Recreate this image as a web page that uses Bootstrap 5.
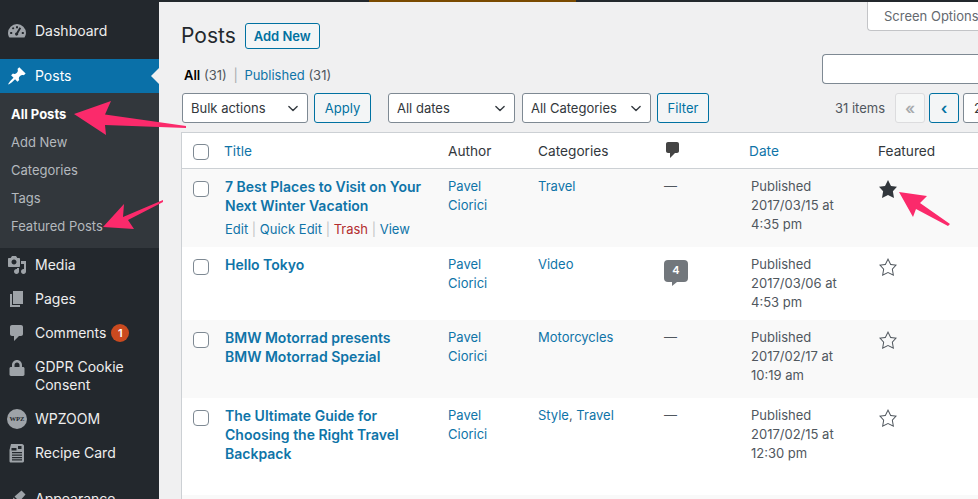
<!DOCTYPE html>
<html lang="en">
<head>
<meta charset="utf-8">
<title>Posts</title>
<link href="https://cdn.jsdelivr.net/npm/bootstrap@5.3.0/dist/css/bootstrap.min.css" rel="stylesheet">
<style>
html,body{height:499px;overflow:hidden}
body{font-family:"Inter","Liberation Sans",sans-serif;font-size:13px;line-height:19px;color:#50575e;background:#f0f0f1;position:relative}
a{text-decoration:none;color:#0f74a8}
.top-strip{height:2px;background:#23282d}
.top-gap{width:369px}
.top-brown{width:207px;background:#7a4a00}
.shell{height:497px}
.side-col{width:159px;flex:none;background:#23282d;overflow:hidden;padding-top:12px}
.side-col .nav-link{display:flex;align-items:flex-start;gap:8px;padding:7px 0 8px 7px;height:34px;color:#eee;font-size:14px;line-height:19px;position:relative}
.side-col .side-tall{height:52px;padding-top:8px;line-height:18px}
.side-ico{width:20px;height:20px;flex:none;fill:#9ea3a8}
.side-col .side-active{background:#0a70a8;color:#fff;margin-top:11px}
.side-active .side-ico{fill:#fff}
.side-notch{position:absolute;right:0;top:9px;border:8px solid transparent;border-right-color:#f0f0f1;border-left-width:0}
.side-sub{background:#32373c;padding:8px 0 7px}
.side-col .side-sub .nav-link{height:28px;padding:4px 0 5px 11px;font-size:13px;color:#b4b9be}
.side-col .side-sub .side-current{color:#fff;font-weight:700}
.side-count{display:inline-block;width:18px;height:18px;border-radius:50%;background:#ca4a1f;color:#fff;font-size:11px;font-weight:600;line-height:18px;text-align:center;margin-left:-3px;margin-top:1px}
.side-gap{margin-top:12px}
.wpz-txt{font-family:"Liberation Serif",serif;font-size:6.6px;font-weight:700;fill:#23282d}
.main-col{flex:1;min-width:0;overflow:hidden;padding-left:22px}
.head-row{height:52px}
.page-ttl{font-family:"Inter","Liberation Sans",sans-serif;font-size:21px;font-weight:400;line-height:26px;color:#23282d;margin:21px 0 0}
.wp-btn{height:30px;padding:0 9px;font-size:13px;line-height:28px;border:1px solid #0071a1;border-radius:3px;background:#f3f5f6;color:#0071a1;flex:none}
.add-btn{height:26px;line-height:24px;font-weight:600;margin:21px 0 0 9px;padding:0 8px}
.screen-tab{width:111px;height:29px;background:#fff;border:1px solid #c3c4c7;border-top:0;border-right:0;border-radius:0 0 0 4px;padding:5px 0 0 16px;color:#646970;white-space:nowrap;overflow:hidden}
.sub-row{height:30px}
.sub-links{color:#50575e;padding-left:3px;margin-bottom:-1px}
.sub-links b{color:#000;font-weight:600}
.sub-sep{color:#a7aaad;margin:0 3px}
.find-box{width:156px;height:30px;border:1px solid #7e8993;border-right:0;border-radius:4px 0 0 4px;background:#fff;padding:0 8px}
.tool-row{height:30px;margin:9px 0 9px 1px;width:900px}
.tool-row .form-select{height:30px;font-size:13px;line-height:28px;padding:0 24px 0 8px;border:1px solid #7e8993;border-radius:3px;color:#32373c;background-position:right 7px center;background-size:14px 11px;flex:none;width:auto}
.pick-bulk{width:126px!important}
.pick-date{width:127px!important;margin-left:9px}
.pick-cat{width:129px!important;margin-left:-1px}
.btn-apply{margin-left:-2px;width:57px}
.btn-filter{margin-left:-2px;width:52px}
.items-lbl{margin-left:118px;width:52px;color:#50575e;line-height:30px;white-space:nowrap}
.pg-wrap{margin-left:0}
.pg-btn{width:30px;height:30px;padding:0;text-align:center;font-size:16px;line-height:26px;font-weight:600}
.pg-off{border-color:#dcdcde;background:#f6f7f7;color:#a7aaad}
.pg-box{border-color:#7e8993;background:#fff;color:#32373c;width:60px;text-align:left;padding-left:10px;font-size:13px;font-weight:400;line-height:28px;border-radius:3px}
.post-tbl{table-layout:fixed;width:1000px;margin:0;border-collapse:separate;border-spacing:0;border:1px solid #ccd0d4;border-width:1px 0 0 1px;--bs-table-bg:#fff;color:#50575e;font-size:13px}
.post-tbl th,.post-tbl td{padding:8px 10px 8px;border:0;font-weight:400;line-height:19px;vertical-align:top;color:#50575e}
.post-tbl thead th{height:35px;padding:9px 10px 7px;color:#32373c;border-bottom:1px solid #ccd0d4;background:#fff;font-size:13.7px}
.post-tbl thead th a{color:#0f74a8}
.post-tbl .hd-title{margin-left:-1px}
.post-tbl .hd-date{margin-left:-2px}
.post-tbl .cell-check{padding:3px 0 0 11px}
.post-tbl thead .cell-check{padding:11px 0 0 11px}
.post-tbl .form-check-input{width:16px;height:16px;margin:0;border:1px solid #7e8993;border-radius:4px;background-color:#fff;display:block;float:none}
.post-tbl tbody .form-check-input{margin-top:9px}
.row-alt td{background:#f9f9f9}
.row-plain td{background:#fff}
.post-ttl{font-weight:600;font-size:14px;display:block;color:#0f74a8}
.row-acts{height:24px;padding-top:5px;white-space:nowrap;color:#c3c4c7}
.row-acts .act-del{color:#b32d2e}
.row-hide{visibility:hidden}
.dash-mark{color:#50575e}
.bubble{display:block;position:relative;width:24px;height:22px;margin-top:5px;background:#72777c;border-radius:4px;color:#fff;font-size:11px;font-weight:600;line-height:21px;text-align:center}
.bubble::after{content:"";position:absolute;left:8px;top:22px;border-top:4px solid #72777c;border-right:5px solid transparent}
.star-svg{width:20px;height:20px;display:block;margin-top:2px}
.hd-bubble{margin:-2px 0 0 -1px;display:block}
.over-art{position:absolute;left:0;top:0;width:978px;height:499px;pointer-events:none}
</style>
</head>
<body>
<div class="top-strip d-flex"><div class="top-gap"></div><div class="top-brown"></div></div>
<div class="shell d-flex">
  <nav class="side-col">
    <ul class="nav flex-column">
      <li class="nav-item"><a class="nav-link" href="#"><svg class="side-ico" viewBox="0 0 20 20"><path fill-rule="evenodd" d="M10 3a9 9 0 0 0-9 9c0 1.9.6 3.4 1.5 4.6h15A8.9 8.9 0 0 0 19 12a9 9 0 0 0-9-9zM9 5.2h2v2H9zM4.8 7.2l1.4-1.2 1.2 1.4L6 8.6zM3.2 11h2v2h-2zM14.8 11h2v2h-2zM12.5 6.2l1.6 1-3 5.2a1.6 1.6 0 1 1-1.7-1z"/></svg>Dashboard</a></li>
      <li class="nav-item"><a class="nav-link side-active" href="#"><svg class="side-ico" viewBox="0 0 20 20"><path d="M10.44 3.02l1.82-1.82 6.36 6.35-1.83 1.82c-1.05-.68-2.48-.57-3.41.36l-.75.75c-.92.93-1.04 2.35-.35 3.41l-1.83 1.82-2.41-2.41-2.8 2.79c-.42.42-3.38 2.71-3.8 2.29s1.86-3.39 2.28-3.81l2.79-2.79L4.1 9.36l1.83-1.82c1.05.69 2.48.57 3.4-.36l.75-.75c.93-.92 1.05-2.35.36-3.41z"/></svg>Posts<span class="side-notch"></span></a></li>
      <li class="nav-item side-sub">
        <a class="nav-link side-current" href="#">All Posts</a>
        <a class="nav-link" href="#">Add New</a>
        <a class="nav-link" href="#">Categories</a>
        <a class="nav-link" href="#">Tags</a>
        <a class="nav-link" href="#">Featured Posts</a>
      </li>
      <li class="nav-item"><a class="nav-link" href="#"><svg class="side-ico" viewBox="0 0 20 20"><path d="M13 11V4c0-.55-.45-1-1-1h-1.67L9 1H5L3.67 3H2c-.55 0-1 .45-1 1v7c0 .55.45 1 1 1h10c.55 0 1-.45 1-1zM7 4.5c1.38 0 2.5 1.12 2.5 2.5S8.38 9.5 7 9.5 4.5 8.38 4.5 7 5.62 4.5 7 4.5zM14 6h5v10.5c0 1.38-1.12 2.5-2.5 2.5S14 17.88 14 16.5s1.12-2.5 2.5-2.5c.17 0 .34.02.5.05V9h-3V6zm-4 8.05V13h2v3.5c0 1.38-1.12 2.5-2.5 2.5S7 17.88 7 16.5 8.12 14 9.5 14c.17 0 .34.02.5.05z"/></svg>Media</a></li>
      <li class="nav-item"><a class="nav-link" href="#"><svg class="side-ico" viewBox="0 0 20 20"><path d="M6 15V2h10v13H6zm-1 1h8v2H3V5h2v11z"/></svg>Pages</a></li>
      <li class="nav-item"><a class="nav-link" href="#"><svg class="side-ico" viewBox="0 0 20 20"><path d="M5 2h9c1.1 0 2 .9 2 2v7c0 1.1-.9 2-2 2h-2l-5 5v-5H5c-1.1 0-2-.9-2-2V4c0-1.1.9-2 2-2z"/></svg>Comments<span class="side-count">1</span></a></li>
      <li class="nav-item"><a class="nav-link side-tall" href="#"><svg class="side-ico" viewBox="0 0 20 20"><path d="M15 9h1c.8 0 1.5.6 1.5 1.4v6.2c0 .8-.7 1.4-1.5 1.4H4c-.8 0-1.500-.6-1.500-1.400v-6.200C2.500 9.600 3.200 9 4 9h1V7c0-2.800 2.200-5 5-5s5 2.200 5 5v2zm-2.500 0V7c0-1.400-1.100-2.500-2.500-2.500S7.500 5.600 7.500 7v2h5z"/></svg><span>GDPR Cookie<br>Consent</span></a></li>
      <li class="nav-item"><a class="nav-link" href="#"><svg class="side-ico" viewBox="0 0 20 20"><circle cx="10" cy="10" r="10"/><text class="wpz-txt" x="10" y="12.300" text-anchor="middle">WPZ</text></svg>WPZOOM</a></li>
      <li class="nav-item"><a class="nav-link" href="#"><svg class="side-ico" viewBox="0 0 20 20"><path fill-rule="evenodd" d="M4 1h11c1 0 2 1 2 2v15c0 1-1 1.500-2 1.500H4c-1 0-1.500-.5-1.500-1.500V7zM11 3v3h3.500V3zM5 9v1.200h10V9zM5 11.500v1.200h10v-1.200zM5 14v1.200h10V14zM5 16.200v1.200h10v-1.200zM4.500 5v2.500h5V5z"/></svg>Recipe Card</a></li>
      <li class="nav-item side-gap"><a class="nav-link" href="#"><svg class="side-ico" viewBox="0 0 20 20"><path d="M14.500 1.500l4 4-6 7-5-5zM6.500 8.500l5 5-2 2-1.500-1-2 4c-1 1.500-4 1.500-4 1.500s2-2 2-4l1-3.500z"/></svg>Appearance</a></li>
    </ul>
  </nav>
  <main class="main-col">
    <div class="head-row d-flex align-items-start">
      <h1 class="page-ttl">Posts</h1>
      <a class="btn wp-btn add-btn" href="#">Add New</a>
      <div class="screen-tab ms-auto">Screen Options</div>
    </div>
    <div class="sub-row d-flex align-items-end">
      <div class="sub-links"><b>All</b> (31) <span class="sub-sep">|</span> <a href="#">Published</a> (31)</div>
      <input class="find-box ms-auto" type="text" aria-label="Search posts">
    </div>
    <div class="tool-row d-flex gap-2 align-items-center">
      <select class="form-select pick-bulk" aria-label="Bulk actions"><option>Bulk actions</option></select>
      <button class="btn wp-btn btn-apply" type="button">Apply</button>
      <select class="form-select pick-date" aria-label="Dates"><option>All dates</option></select>
      <select class="form-select pick-cat" aria-label="Categories"><option>All Categories</option></select>
      <button class="btn wp-btn btn-filter" type="button">Filter</button>
      <span class="items-lbl">31 items</span>
      <span class="d-flex gap-1 pg-wrap">
        <button class="btn wp-btn pg-btn pg-off" type="button">«</button>
        <button class="btn wp-btn pg-btn" type="button">‹</button>
        <span class="btn wp-btn pg-btn pg-box">2</span>
      </span>
    </div>
    <table class="table post-tbl">
      <colgroup><col style="width:33px"><col style="width:223px"><col style="width:90px"><col style="width:126px"><col style="width:87px"><col style="width:127px"><col style="width:120px"><col></colgroup>
      <thead><tr>
        <th class="cell-check"><input class="form-check-input" type="checkbox" aria-label="Select all"></th>
        <th><a class="hd-title" href="#">Title</a></th><th>Author</th><th>Categories</th>
        <th><svg class="hd-bubble" width="20" height="20" viewBox="0 0 20 20" fill="#444"><path d="M5 2h9c1.100 0 2 .9 2 2v7c0 1.100-.9 2-2 2h-2l-5 5v-5H5c-1.100 0-2-.9-2-2V4c0-1.100.9-2 2-2z"/></svg></th>
        <th><a class="hd-date" href="#">Date</a></th><th>Featured</th><th></th>
      </tr></thead>
      <tbody>
        <tr class="row-alt">
          <td class="cell-check"><input class="form-check-input" type="checkbox" aria-label="Select"></td>
          <td><a class="post-ttl" href="#">7 Best Places to Visit on Your Next Winter Vacation</a>
            <div class="row-acts"><a href="#">Edit</a> | <a href="#">Quick Edit</a> | <a class="act-del" href="#">Trash</a> | <a href="#">View</a></div></td>
          <td><a href="#">Pavel Ciorici</a></td><td><a href="#">Travel</a></td><td><span class="dash-mark">—</span></td>
          <td>Published<br>2017/03/15 at<br>4:35 pm</td>
          <td><svg class="star-svg" viewBox="0 0 20 20" fill="#32373c"><path d="M10 1l3 6 6 .75-4.120 4.620L16 19l-6-3-6 3 1.130-6.630L1 7.750 7 7z"/></svg></td><td></td>
        </tr>
        <tr class="row-plain">
          <td class="cell-check"><input class="form-check-input" type="checkbox" aria-label="Select"></td>
          <td><a class="post-ttl" href="#">Hello Tokyo</a><div class="row-acts row-hide">Edit</div></td>
          <td><a href="#">Pavel Ciorici</a></td><td><a href="#">Video</a></td><td><span class="bubble">4</span></td>
          <td>Published<br>2017/03/06 at<br>4:53 pm</td>
          <td><svg class="star-svg" viewBox="0 0 20 20" fill="#50575e"><path d="M10 1L7 7l-6 .75 4.130 4.620L4 19l6-3 6 3-1.130-6.630L19 7.750 13 7zm0 2.240l2.340 4.690 4.650.58-3.180 3.560.87 5.150L10 14.880l-4.680 2.340.87-5.150-3.180-3.560 4.650-.58z"/></svg></td><td></td>
        </tr>
        <tr class="row-alt">
          <td class="cell-check"><input class="form-check-input" type="checkbox" aria-label="Select"></td>
          <td><a class="post-ttl" href="#">BMW Motorrad presents BMW Motorrad Spezial</a><div class="row-acts row-hide">Edit</div></td>
          <td><a href="#">Pavel Ciorici</a></td><td><a href="#">Motorcycles</a></td><td><span class="dash-mark">—</span></td>
          <td>Published<br>2017/02/17 at<br>10:19 am</td>
          <td><svg class="star-svg" viewBox="0 0 20 20" fill="#50575e"><path d="M10 1L7 7l-6 .75 4.130 4.620L4 19l6-3 6 3-1.130-6.630L19 7.750 13 7zm0 2.240l2.340 4.690 4.650.58-3.180 3.560.87 5.150L10 14.880l-4.680 2.340.87-5.150-3.180-3.560 4.650-.58z"/></svg></td><td></td>
        </tr>
        <tr class="row-plain">
          <td class="cell-check"><input class="form-check-input" type="checkbox" aria-label="Select"></td>
          <td><a class="post-ttl" href="#">The Ultimate Guide for Choosing the Right Travel Backpack</a><div class="row-acts row-hide">Edit</div></td>
          <td><a href="#">Pavel Ciorici</a></td><td><a href="#">Style</a>, <a href="#">Travel</a></td><td><span class="dash-mark">—</span></td>
          <td>Published<br>2017/02/15 at<br>12:30 pm</td>
          <td><svg class="star-svg" viewBox="0 0 20 20" fill="#50575e"><path d="M10 1L7 7l-6 .75 4.130 4.620L4 19l6-3 6 3-1.130-6.630L19 7.750 13 7zm0 2.240l2.340 4.690 4.650.58-3.180 3.560.87 5.150L10 14.880l-4.680 2.340.87-5.150-3.180-3.560 4.650-.58z"/></svg></td><td></td>
        </tr>
        <tr class="row-alt"><td colspan="8"></td></tr>
      </tbody>
    </table>
  </main>
</div>
<svg class="over-art" viewBox="0 0 978 499" fill="#fb2a6b">
  <polygon points="74,114 111,101 105,114.500 186,126 186,128 105,125 106,135"/>
  <polygon points="103,227 124,204 123,217 163,200 163,202 128,220 134,229"/>
  <polygon points="899,192 927,196 920,203 950,224 948,226 916,209 913,217"/>
</svg>
</body>
</html>
